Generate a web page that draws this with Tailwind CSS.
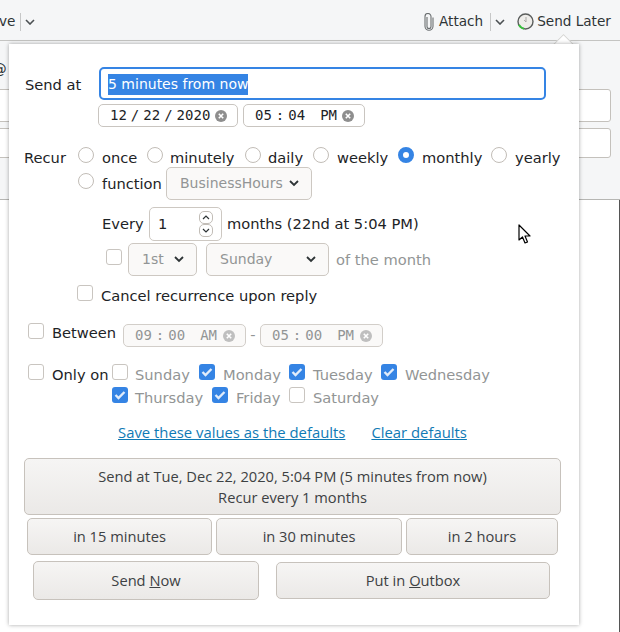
<!DOCTYPE html>
<html lang="en">
<head>
    <meta charset="UTF-8">
    <title>Send Later</title>
    <script src="https://cdn.jsdelivr.net/npm/@tailwindcss/browser@4"></script>
</head>
<body class="font-['DejaVu_Sans',sans-serif] text-[14.67px] text-[#1d2326] bg-white">
<div class="relative w-[620px] h-[632px] overflow-hidden">

    <!-- window behind the popup -->
    <div class="h-[200px] bg-[#f5f6f7] border-b border-[#b6b6b3]">
        <div class="h-[41px] pt-[3px] border-b border-[#c4c4c2] flex items-center text-[13.6px] text-[#2e3436] relative">
            <span class="ml-[-1px] w-[21px]">ve</span>
            <span class="w-px h-[18px] bg-[#c6c7c7]"></span>
            <svg class="ml-[4px]" width="10" height="6" viewBox="0 0 10 6" fill="none" stroke="#4c5153" stroke-width="1.6"><path d="M1 1l4 4 4-4"/></svg>
            <svg class="ml-[389px]" width="10" height="18" viewBox="0 0 10 18" fill="none" stroke="#6a6e70" stroke-width="1.1"><path d="M3 4v9.5a2 2 0 0 0 4 0V3.5a3 3 0 0 0-6 0v9.8a4 4 0 0 0 8 0V4.5"/></svg>
            <span class="ml-[5px]">Attach</span>
            <span class="ml-[7px] w-px h-[18px] bg-[#c6c7c7]"></span>
            <svg class="ml-[4px]" width="10" height="6" viewBox="0 0 10 6" fill="none" stroke="#4c5153" stroke-width="1.6"><path d="M1 1l4 4 4-4"/></svg>
            <svg class="ml-[12px]" width="17" height="17" viewBox="0 0 17 17" fill="none"><circle cx="8.5" cy="8.5" r="7.5" fill="#eeedea" stroke="#5a5d5c" stroke-width="1.4"/><path d="M2 12a7.5 7.5 0 0 0 5 3.8" stroke="#35c13a" stroke-width="2"/><path d="M9 4v5l-2-2" stroke="#9a9a98" stroke-width="0.8"/></svg>
            <span class="ml-[3px]">Send Later</span>
        </div>
        <div class="ml-[-5px] mt-[48px] w-[616px] h-[33px] bg-white border border-[#c4c1bc] rounded-[3px]"></div>
        <div class="ml-[-5px] mt-[6px] w-[616px] h-[30px] bg-white border border-[#c4c1bc] rounded-[3px]"></div>
    </div>
    <div class="absolute right-0 top-[200px] w-px h-[432px] bg-[#555]"></div>
    <div class="absolute left-[-8px] top-[58px] text-[#2e3436]">@</div>

    <!-- popup arrow -->
    <div class="absolute left-[556px] top-[37px] w-[15px] h-[15px] rotate-45 bg-white border border-[#d5d5d3]"></div>

    <!-- popup -->
    <div class="absolute left-[9px] top-[44px] w-[570px] h-[581px] bg-white shadow-[0_0_4px_rgba(0,0,0,0.35)]">

        <!-- send at -->
        <div class="flex items-center mt-[23px] h-[33px]">
            <span class="ml-[16px] w-[74px] pt-[3px]">Send at</span>
            <div class="w-[447px] h-[33px] border-2 border-[#3584e4] rounded-[5px] flex items-center pl-[7px] pt-[2px] text-[14px]">
                <span class="bg-[#3584e4] text-white h-[21px] leading-[21px] whitespace-nowrap">5 minutes from now</span>
            </div>
        </div>
        <div class="flex items-center mt-[4px] ml-[89px] h-[23px] gap-[5px] text-[14px] font-['DejaVu_Sans_Mono',monospace]">
            <div class="w-[140px] h-[23px] border border-[#c9c5c0] rounded-[5px] flex items-center pl-[11px] whitespace-pre">
                <span>12</span><span class="mx-[4px]">/</span><span>22</span><span class="mx-[4px]">/</span><span>2020</span>
                <svg class="ml-[5px]" width="12" height="12" viewBox="0 0 12 12"><circle cx="6" cy="6" r="6" fill="#8e8e8e"/><path d="M3.8 3.8l4.4 4.4M8.2 3.8l-4.4 4.4" stroke="#fff" stroke-width="1.6"/></svg>
            </div>
            <div class="w-[122px] h-[23px] border border-[#c9c5c0] rounded-[5px] flex items-center pl-[11px] whitespace-pre">
                <span>05</span><span class="mx-[4px]">:</span><span>04</span><span class="ml-[15px]">PM</span>
                <svg class="ml-[5px]" width="12" height="12" viewBox="0 0 12 12"><circle cx="6" cy="6" r="6" fill="#8e8e8e"/><path d="M3.8 3.8l4.4 4.4M8.2 3.8l-4.4 4.4" stroke="#fff" stroke-width="1.6"/></svg>
            </div>
        </div>

        <!-- recur -->
        <div class="flex mt-[20px] h-[20px] items-start">
            <span class="ml-[15px] w-[54px]">Recur</span>
            <span class="w-[16px] h-[16px] rounded-full border border-[#c2bdb7]"></span>
            <span class="ml-[8px] w-[45px]">once</span>
            <span class="w-[16px] h-[16px] rounded-full border border-[#c2bdb7]"></span>
            <span class="ml-[7px] w-[75px]">minutely</span>
            <span class="w-[16px] h-[16px] rounded-full border border-[#c2bdb7]"></span>
            <span class="ml-[7px] w-[45px]">daily</span>
            <span class="w-[16px] h-[16px] rounded-full border border-[#c2bdb7]"></span>
            <span class="ml-[8px] w-[61px]">weekly</span>
            <span class="w-[16px] h-[16px] rounded-full border-[5px] border-[#3584e4]"></span>
            <span class="ml-[8px] w-[69px]">monthly</span>
            <span class="w-[16px] h-[16px] rounded-full border border-[#c2bdb7]"></span>
            <span class="ml-[8px]">yearly</span>
        </div>
        <div class="flex items-center ml-[69px] h-[33px]">
            <span class="w-[16px] h-[16px] rounded-full border border-[#c2bdb7] mt-[-5px]"></span>
            <span class="ml-[8px] w-[64px]">function</span>
            <div class="w-[146px] h-[33px] bg-[#faf9f8] border border-[#cdc8c2] rounded-[5px] flex items-center pl-[13px] text-[14px] text-[#929595]">
                BusinessHours
                <svg class="ml-[6px]" width="10" height="7" viewBox="0 0 10 7" fill="none" stroke="#2e3436" stroke-width="1.8"><path d="M1 1l4 4 4-4"/></svg>
            </div>
        </div>

        <!-- every -->
        <div class="flex items-center mt-[7px] ml-[93px] h-[34px]">
            <span class="w-[47px]">Every</span>
            <div class="w-[73px] h-[34px] border border-[#cdc8c2] rounded-[5px] flex items-center pl-[8px]">
                <span class="w-[41px]">1</span>
                <div class="flex flex-col">
                    <div class="w-[14px] h-[13px] border border-[#c2bdb7] rounded-[5px] flex items-center justify-center"><svg width="8" height="5" viewBox="0 0 8 5" fill="none" stroke="#2e3436" stroke-width="1.2"><path d="M1 4l3-3 3 3"/></svg></div>
                    <div class="w-[14px] h-[13px] border border-[#c2bdb7] rounded-[5px] flex items-center justify-center"><svg width="8" height="5" viewBox="0 0 8 5" fill="none" stroke="#2e3436" stroke-width="1.2"><path d="M1 1l3 3 3-3"/></svg></div>
                </div>
            </div>
            <span class="ml-[5px]">months (22nd at 5:04 PM)</span>
        </div>
        <div class="flex items-center mt-[2px] ml-[97px] h-[33px]">
            <span class="w-[16px] h-[16px] rounded-[3px] border border-[#c9c5c0] mt-[-5px]"></span>
            <div class="ml-[6px] w-[69px] h-[33px] bg-[#faf9f8] border border-[#cdc8c2] rounded-[5px] flex items-center pl-[13px] text-[14px] text-[#929595]">
                <span class="w-[32px]">1st</span>
                <svg width="10" height="7" viewBox="0 0 10 7" fill="none" stroke="#2e3436" stroke-width="1.8"><path d="M1 1l4 4 4-4"/></svg>
            </div>
            <div class="ml-[9px] w-[123px] h-[33px] bg-[#faf9f8] border border-[#cdc8c2] rounded-[5px] flex items-center pl-[13px] text-[14px] text-[#929595]">
                <span class="w-[86px]">Sunday</span>
                <svg width="10" height="7" viewBox="0 0 10 7" fill="none" stroke="#2e3436" stroke-width="1.8"><path d="M1 1l4 4 4-4"/></svg>
            </div>
            <span class="ml-[7px] text-[#929595]">of the month</span>
        </div>
        <div class="flex items-start mt-[8px] ml-[68px] h-[20px]">
            <span class="w-[16px] h-[16px] rounded-[3px] border border-[#c9c5c0] mt-[1px]"></span>
            <span class="ml-[8px] mt-[1px]">Cancel recurrence upon reply</span>
        </div>

        <!-- between -->
        <div class="flex items-start mt-[20px] ml-[19px] h-[23px]">
            <span class="w-[16px] h-[16px] rounded-[3px] border border-[#c9c5c0] mt-[-1px]"></span>
            <span class="ml-[8px] w-[71px] mt-[-2px]">Between</span>
            <div class="w-[123px] h-[23px] bg-[#faf9f8] border border-[#d2cec9] rounded-[5px] flex items-center pl-[11px] whitespace-pre text-[14px] font-['DejaVu_Sans_Mono',monospace] text-[#929595]">
                <span>09</span><span class="mx-[4px]">:</span><span>00</span><span class="ml-[15px]">AM</span>
                <svg class="ml-[6px]" width="12" height="12" viewBox="0 0 12 12"><circle cx="6" cy="6" r="6" fill="#bfbfbf"/><path d="M3.8 3.8l4.4 4.4M8.2 3.8l-4.4 4.4" stroke="#fff" stroke-width="1.6"/></svg>
            </div>
            <span class="w-[14px] text-center text-[#929595]">-</span>
            <div class="w-[123px] h-[23px] bg-[#faf9f8] border border-[#d2cec9] rounded-[5px] flex items-center pl-[11px] whitespace-pre text-[14px] font-['DejaVu_Sans_Mono',monospace] text-[#929595]">
                <span>05</span><span class="mx-[4px]">:</span><span>00</span><span class="ml-[15px]">PM</span>
                <svg class="ml-[6px]" width="12" height="12" viewBox="0 0 12 12"><circle cx="6" cy="6" r="6" fill="#bfbfbf"/><path d="M3.8 3.8l4.4 4.4M8.2 3.8l-4.4 4.4" stroke="#fff" stroke-width="1.6"/></svg>
            </div>
        </div>

        <!-- only on -->
        <div class="flex mt-[17px] ml-[19px] h-[23px] items-start">
            <span class="w-[16px] h-[16px] rounded-[3px] border border-[#c9c5c0]"></span>
            <span class="ml-[8px] w-[60px]">Only on</span>
            <span class="w-[16px] h-[16px] rounded-[3px] border border-[#c9c5c0]"></span>
            <span class="ml-[7px] w-[64px] text-[#929595]">Sunday</span>
            <span class="w-[16px] h-[16px] rounded-[3px] bg-[#3584e4] flex items-center justify-center"><svg width="12" height="10" viewBox="0 0 12 10" fill="none" stroke="#fff" stroke-width="2.4" opacity="0.85"><path d="M1.5 5l3 3 6-6"/></svg></span>
            <span class="ml-[8px] w-[66px] text-[#929595]">Monday</span>
            <span class="w-[16px] h-[16px] rounded-[3px] bg-[#3584e4] flex items-center justify-center"><svg width="12" height="10" viewBox="0 0 12 10" fill="none" stroke="#fff" stroke-width="2.4" opacity="0.85"><path d="M1.5 5l3 3 6-6"/></svg></span>
            <span class="ml-[8px] w-[68px] text-[#929595]">Tuesday</span>
            <span class="w-[16px] h-[16px] rounded-[3px] bg-[#3584e4] flex items-center justify-center"><svg width="12" height="10" viewBox="0 0 12 10" fill="none" stroke="#fff" stroke-width="2.4" opacity="0.85"><path d="M1.5 5l3 3 6-6"/></svg></span>
            <span class="ml-[8px] text-[#929595]">Wednesday</span>
        </div>
        <div class="flex ml-[103px] h-[23px] items-start">
            <span class="w-[16px] h-[16px] rounded-[3px] bg-[#3584e4] flex items-center justify-center"><svg width="12" height="10" viewBox="0 0 12 10" fill="none" stroke="#fff" stroke-width="2.4" opacity="0.85"><path d="M1.5 5l3 3 6-6"/></svg></span>
            <span class="ml-[7px] w-[77px] text-[#929595]">Thursday</span>
            <span class="w-[16px] h-[16px] rounded-[3px] bg-[#3584e4] flex items-center justify-center"><svg width="12" height="10" viewBox="0 0 12 10" fill="none" stroke="#fff" stroke-width="2.4" opacity="0.85"><path d="M1.5 5l3 3 6-6"/></svg></span>
            <span class="ml-[8px] w-[53px] text-[#929595]">Friday</span>
            <span class="w-[16px] h-[16px] rounded-[3px] border border-[#c9c5c0]"></span>
            <span class="ml-[8px] text-[#929595]">Saturday</span>
        </div>

        <!-- defaults links -->
        <div class="flex ml-[109px] mt-[11px] h-[22px] font-['Open_Sans',sans-serif] text-[14.85px] text-[#0f7ab5] items-center">
            <a href="#" class="underline">Save these values as the defaults</a>
            <a href="#" class="underline ml-[26px]">Clear defaults</a>
        </div>

        <!-- buttons -->
        <div class="font-['Open_Sans',sans-serif] text-[#3d4143]">
            <div class="mt-[15px] ml-[15px] w-[537px] h-[57px] border border-[#c7c2bc] rounded-[5px] bg-gradient-to-b from-[#f6f5f4] to-[#ebe9e7] flex flex-col items-center justify-center leading-[21px]">
                <span>Send at Tue, Dec 22, 2020, 5:04 PM (5 minutes from now)</span>
                <span>Recur every 1 months</span>
            </div>
            <div class="flex mt-[3px] ml-[18px] gap-[4px]">
                <div class="w-[185px] h-[37px] pb-[2px] border border-[#c7c2bc] rounded-[5px] bg-gradient-to-b from-[#f6f5f4] to-[#ebe9e7] flex items-center justify-center">in 15 minutes</div>
                <div class="w-[186px] h-[37px] pb-[2px] border border-[#c7c2bc] rounded-[5px] bg-gradient-to-b from-[#f6f5f4] to-[#ebe9e7] flex items-center justify-center">in 30 minutes</div>
                <div class="w-[152px] h-[37px] pb-[2px] border border-[#c7c2bc] rounded-[5px] bg-gradient-to-b from-[#f6f5f4] to-[#ebe9e7] flex items-center justify-center">in 2 hours</div>
            </div>
            <div class="flex items-center mt-[6px] ml-[24px] h-[39px]">
                <div class="w-[226px] h-[39px] pb-[2px] border border-[#c7c2bc] rounded-[5px] bg-gradient-to-b from-[#f6f5f4] to-[#ebe9e7] flex items-center justify-center whitespace-pre">Send <u>N</u>ow</div>
                <div class="ml-[17px] w-[274px] h-[37px] pb-[2px] border border-[#c7c2bc] rounded-[5px] bg-gradient-to-b from-[#f6f5f4] to-[#ebe9e7] flex items-center justify-center whitespace-pre">Put in <u>O</u>utbox</div>
            </div>
        </div>
    </div>

    <!-- mouse cursor -->
    <svg class="absolute left-[518px] top-[224px]" width="14" height="20" viewBox="0 0 14 20"><path d="M1 1v15l3.5-3 2.5 6 2.5-1-2.5-6h5z" fill="#fff" stroke="#000" stroke-width="1.2" stroke-linejoin="round"/></svg>
</div>
</body>
</html>
